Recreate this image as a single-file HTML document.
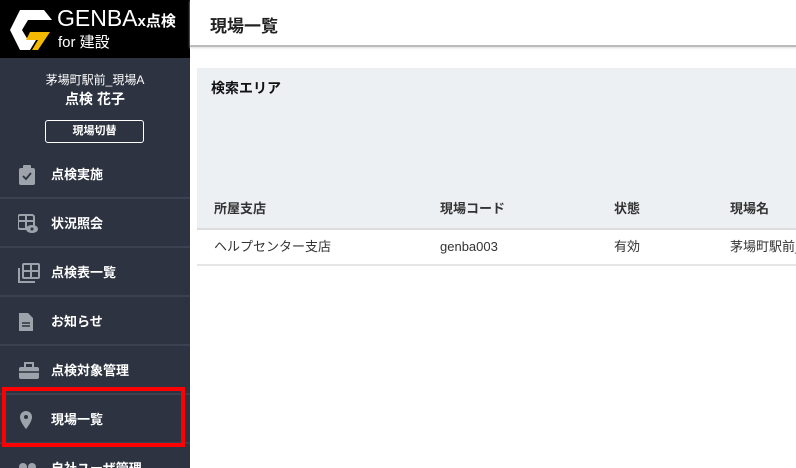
<!DOCTYPE html>
<html style="overflow:hidden;width:796px;height:468px"><head><meta charset="utf-8"><style>
*{margin:0;padding:0;box-sizing:border-box}
body{width:796px;height:468px;overflow:hidden;background:#fff;font-family:"Liberation Sans","Noto Sans CJK JP",sans-serif;position:relative}
#side{position:absolute;left:0;top:0;width:190px;height:468px;background:#2d3340;overflow:hidden}
#logo{position:absolute;left:0;top:0;width:190px;height:58px;background:#000}
.lt{position:absolute;color:#fff;white-space:nowrap}
.user{position:absolute;left:0;width:190px;text-align:center;color:#fff}
.btn{position:absolute;left:45px;top:120px;width:99px;height:23px;border:1px solid #fff;border-radius:3px;color:#fff;font-size:11px;font-weight:bold;text-align:center;line-height:21px}
.item{position:absolute;left:0;width:190px;height:49px;border-bottom:2px solid #3a4150;color:#fff;font-size:13px;font-weight:bold;line-height:49px;padding-left:51px;white-space:nowrap}
.item svg{position:absolute;left:18px;top:15px}
#red{position:absolute;left:2px;top:387px;width:183px;height:60px;border:4px solid #f00}
#hdr{position:absolute;left:190px;top:0;width:606px;height:47px;background:#fff;border-bottom:2px solid #bbb;box-shadow:0 1px 2px #ddd}
#hdr span{position:absolute;left:20px;top:12px;font-size:17px;font-weight:bold;color:#222}
#panel{position:absolute;left:197px;top:68px;width:599px;height:162px;background:#edf0f3;border-bottom:2px solid #ddd}
#panel .t{position:absolute;left:14px;top:10px;font-size:14px;font-weight:bold;color:#111}
.th{position:absolute;top:200px;font-size:13px;line-height:18px;font-weight:bold;color:#333}
.td{position:absolute;top:238px;font-size:13px;line-height:18px;color:#333;white-space:nowrap}
#rowb{position:absolute;left:197px;top:264px;width:599px;height:2px;background:#e6e6e6}
#wrap{position:absolute;left:0;top:0;width:796px;height:468px;overflow:hidden}
</style></head><body><div id="wrap">
<div id="side">
 <div id="logo">
  <svg width="48" height="44" viewBox="0 0 48 44" style="position:absolute;left:8px;top:8px">
   <polygon points="12,2 36,2 44,12 20,12 14,22 20,32 28,32 22,42 12,42 2,22" fill="#fff"/>
   <polygon points="22,24 42,24 30,42 24,42 30,32 18,32" fill="#f5b800"/>
  </svg>
  <div class="lt" style="left:57px;top:5px;font-size:23px">GENBA<span style="font-size:15px;font-weight:bold">x点検</span></div>
  <div class="lt" style="left:58px;top:31px;font-size:15px">for 建設</div>
 </div>
 <div class="user" style="top:71px;font-size:12px">茅場町駅前_現場A</div>
 <div class="user" style="top:89px;font-size:14px;font-weight:bold">点検 花子</div>
 <div class="btn">現場切替</div>
 <div class="item" style="top:150px"><svg width="18" height="20"><rect x="1" y="3" width="16" height="17" rx="2" fill="#9da2ab"/><rect x="5" y="0" width="8" height="5" rx="1" fill="#9da2ab"/><path d="M5 11l3 3 5-6" stroke="#2d3340" stroke-width="1.8" fill="none"/></svg>点検実施</div>
 <div class="item" style="top:199px"><svg width="20" height="20"><rect x="0" y="1" width="16" height="14" rx="2" fill="none" stroke="#9da2ab" stroke-width="2"/><path d="M1 7h14M8 1v14" stroke="#9da2ab" stroke-width="2"/><ellipse cx="14" cy="15" rx="6" ry="4" fill="#9da2ab"/><circle cx="14" cy="15" r="1.5" fill="#2d3340"/></svg>状況照会</div>
 <div class="item" style="top:248px"><svg width="22" height="20"><path d="M1 5v14h16" stroke="#9da2ab" stroke-width="2" fill="none"/><rect x="5" y="1" width="16" height="14" rx="1" fill="none" stroke="#9da2ab" stroke-width="2"/><path d="M5 8h16M13 1v14" stroke="#9da2ab" stroke-width="2"/></svg>点検表一覧</div>
 <div class="item" style="top:297px"><svg width="16" height="20"><path d="M1 1h9l5 5v13H1z" fill="#9da2ab"/><path d="M4 11h8M4 14h8" stroke="#2d3340" stroke-width="1.5"/></svg>お知らせ</div>
 <div class="item" style="top:346px"><svg width="22" height="20"><rect x="1" y="6" width="20" height="12" rx="2" fill="#9da2ab"/><rect x="7" y="2" width="8" height="5" fill="none" stroke="#9da2ab" stroke-width="2"/><path d="M1 11h20" stroke="#2d3340" stroke-width="1.5"/></svg>点検対象管理</div>
 <div class="item" style="top:395px"><svg width="16" height="20"><path d="M8 1a6 6 0 0 1 6 6c0 5-6 12-6 12S2 12 2 7a6 6 0 0 1 6-6z" fill="#9da2ab"/><circle cx="8" cy="7" r="2" fill="#2d3340"/></svg>現場一覧</div>
 <div class="item" style="top:444px;border:none;height:24px;overflow:hidden"><svg width="20" height="20"><circle cx="5" cy="8" r="4" fill="#9da2ab"/><circle cx="14" cy="8" r="4" fill="#9da2ab"/></svg>自社ユーザ管理</div>
 <div id="red"></div>
</div>
<div id="hdr"><span>現場一覧</span></div>
<div id="panel"><div class="t">検索エリア</div></div>
<div class="th" style="left:214px">所屋支店</div>
<div class="th" style="left:440px">現場コード</div>
<div class="th" style="left:614px">状態</div>
<div class="th" style="left:730px">現場名</div>
<div class="td" style="left:214px">ヘルプセンター支店</div>
<div class="td" style="left:440px">genba003</div>
<div class="td" style="left:614px">有効</div>
<div class="td" style="left:730px">茅場町駅前_現場A</div>
<div id="rowb"></div>
</div></body></html>
